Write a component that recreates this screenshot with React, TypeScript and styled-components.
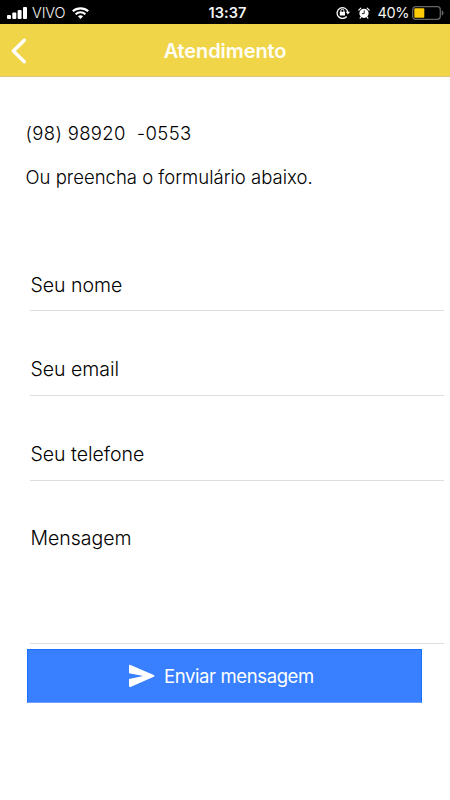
import React from "react";
import styled, { createGlobalStyle } from "styled-components";

const GlobalStyle = createGlobalStyle`
  * { box-sizing: border-box; }
  body {
    margin: 0;
    background: #fff;
    color: #000;
    font-family: Inter, "Liberation Sans", sans-serif;
  }
`;

const Screen = styled.div`
  width: 450px;
  height: 800px;
  background: #fff;
  display: flex;
  flex-direction: column;
  overflow: hidden;
`;

const StatusBar = styled.header`
  height: 24px;
  flex: none;
  display: grid;
  grid-template-columns: 190px 75px 1fr;
  align-items: center;
  background: #000;
  color: #f4f4f4;
  font-size: 14.5px;
  line-height: 25px;
`;

const StatusGroup = styled.div<{ $end?: boolean }>`
  display: flex;
  align-items: center;
  height: 24px;
  justify-content: ${(p) => (p.$end ? "flex-end" : "flex-start")};
  padding: ${(p) => (p.$end ? "0 6px 0 0" : "0 0 0 7px")};
  svg { flex: none; display: block; }
`;

const Carrier = styled.span`
  margin: 0 7px 0 5px;
  font-weight: 300;
  letter-spacing: -0.1px;
`;

const Clock = styled.span`
  text-align: center;
  font-weight: 600;
  font-size: 14.5px;
  letter-spacing: 0.1px;
`;

const Percent = styled.span`
  margin: 0 3px 0 7px;
  letter-spacing: -0.4px;
`;

const AlarmSlot = styled.span`
  margin-left: 8px;
`;

const NavBar = styled.nav`
  height: 53px;
  flex: none;
  display: grid;
  grid-template-columns: 50px 1fr 50px;
  align-items: center;
  background: #f0d548;
  border-bottom: 1px solid #d9c67a;
`;

const BackButton = styled.button`
  display: flex;
  padding: 0 0 0 10px;
  border: 0;
  background: none;
`;

const Title = styled.h1`
  margin: 0;
  padding-top: 1px;
  color: #fffef6;
  font-size: 20px;
  font-weight: 600;
  line-height: 52px;
  letter-spacing: -0.1px;
  text-align: center;
`;

const Intro = styled.section`
  padding: 44px 25.5px 0;
  height: 187px;
  flex: none;
`;

const IntroLine = styled.p<{ $spacing: number }>`
  margin: 0 0 20px;
  font-size: 18.5px;
  font-weight: 350;
  line-height: 24px;
  white-space: pre;
  letter-spacing: ${(p) => p.$spacing}px;
`;

const Form = styled.form`
  display: flex;
  flex-direction: column;
`;

const Field = styled.label<{ $height: number; $top: number }>`
  height: ${(p) => p.$height}px;
  margin: 0 6px 0 30px;
  padding: ${(p) => p.$top}px 0 0 0.5px;
  border-bottom: 1px solid #dedede;
`;

const FieldText = styled.span`
  display: block;
  font-size: 19.5px;
  font-weight: 350;
  line-height: 24px;
  letter-spacing: -0.02px;
`;

const FieldGap = styled.div`
  height: 36px;
`;

const SendButton = styled.button`
  width: 395px;
  height: 54px;
  margin: 5px 0 0 27.4px;
  padding: 0 8px 0 0;
  display: flex;
  align-items: center;
  justify-content: center;
  gap: 9px;
  border: 1px solid #1a70fb;
  border-bottom-color: #6f9ffb;
  background: #3880ff;
  color: #fff;
  font-family: inherit;
  font-size: 18.5px;
  letter-spacing: -0.38px;
`;

const Signal = () => (
  <svg width="20" height="12" viewBox="0 0 20 12" fill="#fff">
    <rect x="0" y="8" width="4" height="4" rx="1" />
    <rect x="5.3" y="5.5" width="4" height="6.5" rx="1" />
    <rect x="10.6" y="3" width="4" height="9" rx="1" />
    <rect x="16" y="0" width="4" height="12" rx="1" />
  </svg>
);

const Wifi = () => (
  <svg width="17" height="12" viewBox="0 0 17 12" fill="none" stroke="#fff" strokeWidth="2.2">
    <path d="M.8 4.3c4.2-4 11.2-4 15.4 0M3.6 7.2c2.7-2.6 7.1-2.6 9.8 0" />
    <path d="M5.9 9.3c1.5-1.4 3.7-1.4 5.2 0L8.5 12z" fill="#fff" stroke="none" />
  </svg>
);

const RotationLock = () => (
  <svg width="14" height="13" viewBox="0 0 14 13" fill="none" stroke="#fff">
    <path d="M10.7 10.5A5.4 5.4 0 1 1 11.8 6" strokeWidth="1.3" />
    <path d="M9.7 5.7H14l-2.1 2.8z" fill="#fff" stroke="none" />
    <rect x="3.8" y="5.7" width="5.2" height="3.8" rx=".5" fill="#fff" stroke="none" />
    <path d="M4.9 6V4.7a1.5 1.5 0 0 1 3 0V6" />
  </svg>
);

const Alarm = () => (
  <svg width="12" height="12" viewBox="0 0 13 13">
    <circle cx="6.5" cy="6.8" r="5" fill="#fff" />
    <path d="M.9 3.4 3 1.3M12.1 3.4 10 1.3M3.1 11l-.8 1M9.9 11l.8 1" stroke="#fff" strokeWidth="1.3" strokeLinecap="round" />
    <path d="M6.7 3.7v3.5H4.2" stroke="#111" fill="none" />
  </svg>
);

const Battery = () => (
  <svg width="32" height="14" viewBox="0 0 32 14">
    <rect x=".7" y=".7" width="27.6" height="12.6" rx="3" fill="none" stroke="#656565" strokeWidth="1.3" />
    <rect x="2.3" y="2.3" width="10" height="9.4" rx="1" fill="#fdcb08" />
    <path d="M29.7 4.5c2.5.6 2.5 4.4 0 5z" fill="#656565" />
  </svg>
);

const BackChevron = () => (
  <svg width="17" height="26" viewBox="0 0 17 26">
    <path d="M14.3 2.2 3.4 13l10.9 10.8" fill="none" stroke="#fff" strokeWidth="3.4" strokeLinecap="round" strokeLinejoin="round" />
  </svg>
);

const Plane = () => (
  <svg width="27" height="24" viewBox="0 0 27 24" fill="#fff">
    <path d="M1 1.7C1 .8 1.6.5 2.5.9l23.3 10c.9.4.9 1.5 0 1.9L2.5 22.9C1.6 23.2 1 22.9 1 22v-7.1l14.3-3L1 9.2z" />
  </svg>
);

const fields = [
  { label: "Seu nome", height: 47, top: 9 },
  { label: "Seu email", height: 49, top: 10 },
  { label: "Seu telefone", height: 49, top: 10 },
  { label: "Mensagem", height: 127, top: 9 },
];

export default function App() {
  return (
    <Screen>
      <GlobalStyle />
      <StatusBar>
        <StatusGroup>
          <Signal />
          <Carrier>VIVO</Carrier>
          <Wifi />
        </StatusGroup>
        <Clock>13:37</Clock>
        <StatusGroup $end>
          <RotationLock />
          <AlarmSlot>
            <Alarm />
          </AlarmSlot>
          <Percent>40%</Percent>
          <Battery />
        </StatusGroup>
      </StatusBar>
      <NavBar>
        <BackButton type="button" aria-label="Voltar">
          <BackChevron />
        </BackButton>
        <Title>Atendimento</Title>
      </NavBar>
      <Intro>
        <IntroLine $spacing={0.34}>(98) 98920  -0553</IntroLine>
        <IntroLine $spacing={0.01}>Ou preencha o formulário abaixo.</IntroLine>
      </Intro>
      <Form>
        {fields.map((field, index) => (
          <React.Fragment key={field.label}>
            {index > 0 && <FieldGap />}
            <Field $height={field.height} $top={field.top}>
              <FieldText>{field.label}</FieldText>
            </Field>
          </React.Fragment>
        ))}
        <SendButton type="button">
          <Plane />
          <span>Enviar mensagem</span>
        </SendButton>
      </Form>
    </Screen>
  );
}
